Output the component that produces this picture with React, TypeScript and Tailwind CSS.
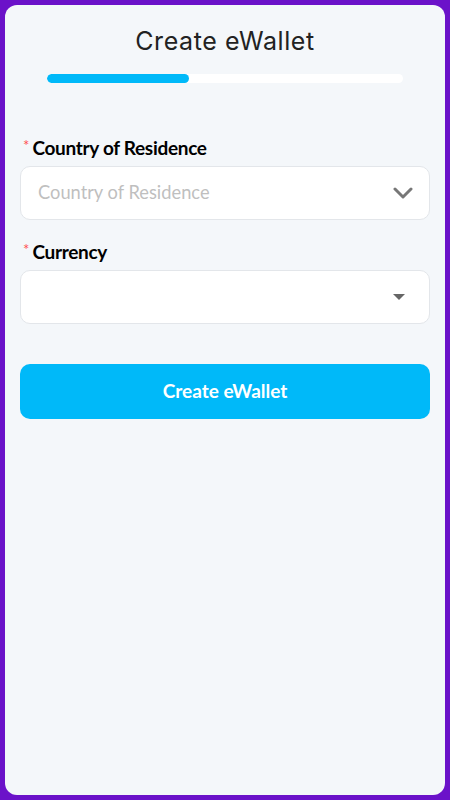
import React from 'react';

const Label: React.FC<{ text: string }> = ({ text }) => (
  <div className="flex items-start h-[22px] pl-[3px]">
    <span className="text-[#ff4d4f] text-[15px] leading-[15px] mr-[3px] mt-[1px]">*</span>
    <span className="text-[19px] leading-[22px] font-bold text-black tracking-[-0.3px]">{text}</span>
  </div>
);

export default function App() {
  return (
    <div className="w-full h-[800px] bg-[#6b12c9] p-[5px]" style={{ fontFamily: 'Lato, "Open Sans", sans-serif' }}>
      <div className="h-full bg-[#f4f7fa] rounded-[12px] px-[15px] pt-[21px]">
        {/* Header */}
        <h1
          className="text-center text-[25px] leading-[30px] text-[#222] font-normal tracking-[0.6px]"
          style={{ fontFamily: 'Inter, "Open Sans", sans-serif' }}
        >
          Create eWallet
        </h1>
        <div className="mx-[27px] mt-[18px] h-[9px] bg-white rounded-full overflow-hidden">
          <div className="h-full w-[40%] bg-[#00b9f9] rounded-full" />
        </div>

        {/* Form */}
        <div className="mt-[54px]">
          <Label text="Country of Residence" />
          <div className="mt-[7px] h-[54px] bg-white border border-[#e3e6ea] rounded-[10px] flex items-center justify-between pl-[17px] pr-[16px]">
            <span className="text-[18.3px] text-[#bfbfbf]">Country of Residence</span>
            <svg width="20" height="14" viewBox="0 0 20 14" fill="none">
              <path d="M2 3 L10 11 L18 3" stroke="#777" strokeWidth="3" strokeLinecap="round" strokeLinejoin="round" />
            </svg>
          </div>

          <div className="mt-[21px]">
            <Label text="Currency" />
          </div>
          <div className="mt-[7px] h-[54px] bg-white border border-[#e3e6ea] rounded-[10px] flex items-center justify-end pr-[24px]">
            <svg width="12" height="7" viewBox="0 0 12 7">
              <path d="M0 0 H12 L6 6 Z" fill="#666" />
            </svg>
          </div>

          <button
            type="button"
            className="mt-[40px] w-full h-[55px] bg-[#00b9f9] rounded-[10px] text-white text-[19px] font-bold"
          >
            Create eWallet
          </button>
        </div>
      </div>
    </div>
  );
}
